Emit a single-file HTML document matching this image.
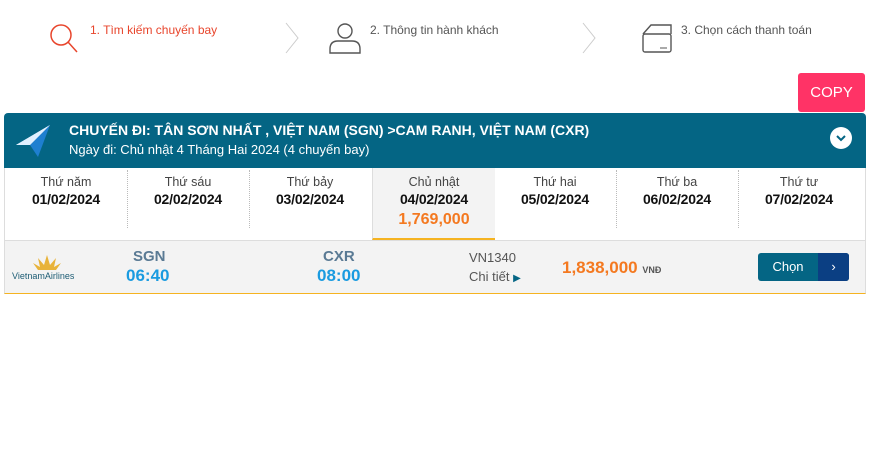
<!DOCTYPE html>
<html><head><meta charset="utf-8"><style>
body{margin:0;width:876px;height:461px;background:#fff;font-family:"Liberation Sans",Arial,sans-serif;position:relative;overflow:hidden}
.a{position:absolute}
.step{font-size:12px;color:#555}
.hdr{left:4px;top:113px;width:862px;height:55px;background:#046584;border-radius:4px 4px 0 0}
.days{left:4px;top:168px;width:860px;height:72px;border-left:1px solid #ddd;border-right:1px solid #ddd}
.day{position:absolute;top:0;width:122px;height:72px;text-align:center}
.day .n{font-size:12.5px;color:#444;margin-top:7px}
.day .d{font-size:14px;font-weight:bold;color:#111;margin-top:2px;letter-spacing:-0.2px}
.sep{position:absolute;top:2px;height:58px;border-left:1px dotted #bbb}
.row{left:4px;top:240px;width:860px;height:52px;background:#f3f3f3;border:1px solid #ddd;border-bottom:1px solid #f5b321}
</style></head><body>
<svg class="a" style="left:48px;top:22px" width="32" height="32"><circle cx="13" cy="13" r="10" fill="none" stroke="#e8452c" stroke-width="1.5"/><line x1="20" y1="20" x2="29" y2="30" stroke="#e8452c" stroke-width="1.5"/></svg>
<div class="a step" style="left:90px;top:23px;color:#e8452c">1. Tìm kiếm chuyến bay</div>
<svg class="a" style="left:283px;top:22px" width="16" height="32"><polyline points="3,1 15,16 3,31" fill="none" stroke="#ccc" stroke-width="1"/></svg>
<svg class="a" style="left:328px;top:22px" width="34" height="32"><circle cx="17" cy="9" r="7" fill="none" stroke="#555" stroke-width="1.4"/><path d="M2,31 V27 Q2,19 10,19 H24 Q32,19 32,27 V31 Z" fill="none" stroke="#555" stroke-width="1.4"/></svg>
<div class="a step" style="left:370px;top:23px">2. Thông tin hành khách</div>
<svg class="a" style="left:580px;top:22px" width="16" height="32"><polyline points="3,1 15,16 3,31" fill="none" stroke="#ccc" stroke-width="1"/></svg>
<svg class="a" style="left:641px;top:22px" width="34" height="32"><path d="M2,12 L10,3 L30,3 L30,12" fill="none" stroke="#555" stroke-width="1.4"/><rect x="2" y="12" width="28" height="18" rx="2" fill="none" stroke="#555" stroke-width="1.4"/><line x1="19" y1="26" x2="26" y2="26" stroke="#555"/></svg>
<div class="a step" style="left:681px;top:23px">3. Chọn cách thanh toán</div>
<div class="a" style="left:798px;top:73px;width:67px;height:39px;background:#ff3366;border-radius:3px;color:#fff;font-size:15px;line-height:39px;text-align:center">COPY</div>
<div class="a hdr">
<svg class="a" style="left:10px;top:10px" width="40" height="36"><polygon points="36,2 2,22 16,22" fill="#fff"/><polygon points="36,2 16,22 24,34" fill="#1e7fd0"/><polygon points="36,2 16,22 2,22" fill="#e0f0ff"/></svg>
<div class="a" style="left:65px;top:9px;color:#fff;font-weight:bold;font-size:14px">CHUYẾN ĐI: TÂN SƠN NHẤT , VIỆT NAM (SGN) &gt;CAM RANH, VIỆT NAM (CXR)</div>
<div class="a" style="left:65px;top:29px;color:#fff;font-size:13px">Ngày đi: Chủ nhật 4 Tháng Hai 2024 (4 chuyến bay)</div>
<div class="a" style="left:826px;top:14px;width:22px;height:22px;border-radius:50%;background:#fff"><svg width="22" height="22"><polyline points="7,9 11,13 15,9" fill="none" stroke="#046584" stroke-width="2"/></svg></div>
</div>
<div class="a days">
<div class="day" style="left:0"><div class="n">Thứ năm</div><div class="d">01/02/2024</div></div>
<div class="sep" style="left:122px"></div>
<div class="day" style="left:122px"><div class="n">Thứ sáu</div><div class="d">02/02/2024</div></div>
<div class="sep" style="left:244px"></div>
<div class="day" style="left:244px"><div class="n">Thứ bảy</div><div class="d">03/02/2024</div></div>
<div class="day" style="left:367px;background:#f3f3f3;border-bottom:2px solid #f5b321;height:70px;border-left:1px solid #ddd"><div class="n">Chủ nhật</div><div class="d">04/02/2024</div><div style="color:#f47920;font-weight:bold;font-size:16px;margin-top:4px">1,769,000</div></div>
<div class="day" style="left:489px"><div class="n">Thứ hai</div><div class="d">05/02/2024</div></div>
<div class="sep" style="left:611px"></div>
<div class="day" style="left:611px"><div class="n">Thứ ba</div><div class="d">06/02/2024</div></div>
<div class="sep" style="left:733px"></div>
<div class="day" style="left:733px"><div class="n">Thứ tư</div><div class="d">07/02/2024</div></div>
</div>
<div class="a row">
<svg class="a" style="left:27px;top:12px" width="30" height="18"><path d="M15,2 L18,12 L24,5 L22,14 L29,10 L24,17 H6 L1,10 L8,14 L6,5 L12,12 Z" fill="#e8b33a"/></svg>
<div class="a" style="left:7px;top:30px;font-size:9px;color:#1d5c74">VietnamAirlines</div>
<div class="a" style="left:128px;top:7px;font-size:15px;font-weight:bold;color:#5a7a94">SGN</div>
<div class="a" style="left:121px;top:25px;font-size:17px;font-weight:bold;color:#1a9be0">06:40</div>
<div class="a" style="left:318px;top:7px;font-size:15px;font-weight:bold;color:#5a7a94">CXR</div>
<div class="a" style="left:312px;top:25px;font-size:17px;font-weight:bold;color:#1a9be0">08:00</div>
<div class="a" style="left:464px;top:9px;font-size:13px;color:#555">VN1340</div>
<div class="a" style="left:464px;top:28px;font-size:13px;color:#555">Chi tiết <span style="color:#046584;font-size:10px">&#9654;</span></div>
<div class="a" style="left:557px;top:17px;font-size:17px;font-weight:bold;color:#f47920">1,838,000 <span style="font-size:9px;color:#555">VNĐ</span></div>
<div class="a" style="left:753px;top:12px;width:91px;height:28px;border-radius:3px;background:#046584;overflow:hidden"><div class="a" style="left:0;top:0;width:60px;line-height:28px;text-align:center;color:#fff;font-size:13px">Chọn</div><div class="a" style="left:60px;top:0;width:31px;height:28px;background:#0b3f83;color:#fff;text-align:center;line-height:28px;font-size:13px">›</div></div>
</div>
</body></html>
